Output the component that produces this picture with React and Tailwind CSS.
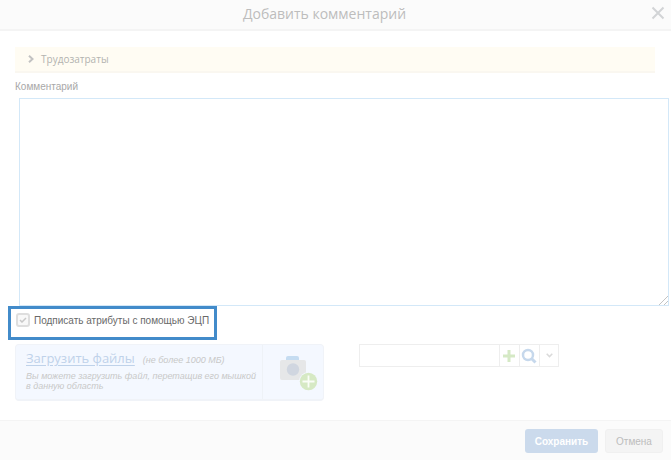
import { useState } from "react";

function CameraIcon() {
  return (
    <svg width="40" height="38" viewBox="0 0 40 38" aria-hidden="true">
      <path d="M8 6V3q0-2 2-2h9q2 0 2 2v3z" fill="#c5dcf1" />
      <rect x="2" y="5" width="26" height="20" rx="2" fill="#e6e7e8" />
      <circle cx="15" cy="14.500" r="6.200" fill="#d0d6e0" />
      <circle cx="30.500" cy="26.500" r="9.500" fill="#f4f8ff" />
      <circle cx="30.500" cy="26.500" r="8.700" fill="#d6e9c4" />
      <path d="M30.500 20.500v12M24.500 26.500h12" stroke="#fafdf7" strokeWidth="1.800" />
    </svg>
  );
}

function Header() {
  return (
    <header className="flex h-[31px] border-b-2 border-[#f4f4f4] bg-[#fbfbfb]">
      <h1 className="flex-1 text-center font-['Open_Sans',sans-serif] text-[14px] leading-7 text-[#bdbdbd]">
        Добавить комментарий
      </h1>
      <button type="button" aria-label="Закрыть" className="flex w-[22px] items-start pt-[6px] pl-[2px]">
        <svg width="14" height="14" viewBox="0 0 14 14" aria-hidden="true">
          <path d="M1.500 1.500l11 11M12.500 1.500l-11 11" stroke="#d2d4d6" strokeWidth="2" />
        </svg>
      </button>
    </header>
  );
}

function UploadBox() {
  return (
    <section className="flex h-[57px] w-[309px] rounded-sm border border-b-2 border-[#f0f3f8] bg-[#f4f8ff]">
      <div className="flex-1 border-r border-[#eef2f7] pt-1 pl-[10px]">
        <div className="flex items-baseline gap-2">
          <a
            href="#files"
            className="font-['Open_Sans',sans-serif] text-[13px] leading-[18px] text-[#bfd2ea] underline underline-offset-2"
          >
            Загрузить файлы
          </a>
          <span className="text-[9px] text-[#c8c8c8] italic">(не более 1000 МБ)</span>
        </div>
        <p className="mt-[3px] text-[9px] leading-[10px] text-[#c8c8c8] italic">
          Вы можете загрузить файл, перетащив его мышкой
          <br />в данную область
        </p>
      </div>
      <div className="flex w-[60px] items-start justify-end pt-[10px] pr-[5px]">
        <CameraIcon />
      </div>
    </section>
  );
}

function LookupField() {
  return (
    <div className="flex h-[23px] w-[200px] divide-x divide-[#eeeeee] border border-[#eeeeee] bg-white">
      <input type="text" aria-label="Поиск" className="min-w-0 flex-1 px-1 text-[10px] outline-none" />
      <button type="button" aria-label="Добавить" className="flex w-5 items-center justify-center pr-[2px]">
        <svg width="14" height="14" viewBox="0 0 14 14" aria-hidden="true">
          <path d="M7 1v12M1 7h12" stroke="#d5e9c5" strokeWidth="3" />
        </svg>
      </button>
      <button type="button" aria-label="Найти" className="flex w-5 items-center justify-center pr-[2px]">
        <svg width="16" height="16" viewBox="0 0 16 16" fill="none" aria-hidden="true">
          <circle cx="7" cy="7" r="5" stroke="#c6d8ec" strokeWidth="2.500" />
          <path d="M10.500 10.500l4 4" stroke="#c6d8ec" strokeWidth="3" />
        </svg>
      </button>
      <button type="button" aria-label="Открыть список" className="flex w-[18px] items-center justify-center">
        <svg width="7" height="5" viewBox="0 0 7 5" fill="none" aria-hidden="true">
          <path d="M.7.800L3.500 3.600 6.300.800" stroke="#dadada" strokeWidth="1.500" />
        </svg>
      </button>
    </div>
  );
}

export default function App() {
  const [comment, setComment] = useState("");
  const [signed, setSigned] = useState(true);

  return (
    <form className="flex min-h-screen flex-col bg-white font-['Liberation_Sans',Arial,sans-serif]">
      <Header />

      <main className="flex-1 pt-4">
        <button
          type="button"
          className="mr-4 ml-[15px] flex h-[26px] w-[calc(100%-31px)] items-center gap-[7px] border-b-2 border-[#faf7f0] bg-[#fffcf3] pl-[13px] font-['Open_Sans',sans-serif] text-[10px] text-[#b3b3b0]"
        >
          <svg width="6" height="8" viewBox="0 0 6 8" fill="none" aria-hidden="true">
            <path d="M1 .800L4.500 4 1 7.200" stroke="#c2c2c2" strokeWidth="2" />
          </svg>
          Трудозатраты
        </button>

        <div className="pt-2 pr-[2px] pl-[15px]">
          <label htmlFor="comment" className="block text-[10px] leading-3 text-[#a8a8a8]">
            Комментарий
          </label>
          <div className="pt-[5px] pl-1">
            <textarea
              id="comment"
              value={comment}
              onChange={(e) => setComment(e.target.value)}
              className="block h-[208px] w-full resize-y border border-[#d3e8f8] p-1 text-[10px] outline-none [&::-webkit-resizer]:bg-[linear-gradient(135deg,transparent_68%,#c4c4c4_68%,#c4c4c4_72%,transparent_72%,transparent_84%,#c4c4c4_84%,#c4c4c4_88%,transparent_88%)]"
            />
          </div>
        </div>

        <div className="ml-2 flex h-[34px] w-[209px] items-start border-3 border-[#428bca] pt-1 pl-[5px]">
          <label className="flex items-start gap-1 text-[10px] leading-4 text-[#696969]">
            <span className="grid size-[14px] place-items-center">
              <input
                type="checkbox"
                checked={signed}
                onChange={(e) => setSigned(e.target.checked)}
                className="col-start-1 row-start-1 size-[14px] appearance-none rounded-[3px] border-2 border-[#dedede] bg-[#f8f8f8]"
              />
              {signed && (
                <svg
                  width="8"
                  height="6"
                  viewBox="0 0 8 6"
                  fill="none"
                  className="pointer-events-none col-start-1 row-start-1"
                  aria-hidden="true"
                >
                  <path d="M1 3l2 2 4-4" stroke="#c8c8c8" strokeWidth="1.500" />
                </svg>
              )}
            </span>
            Подписать атрибуты с помощью ЭЦП
          </label>
        </div>

        <div className="mt-1 flex items-start gap-[35px] pl-[15px]">
          <UploadBox />
          <LookupField />
        </div>
      </main>

      <footer className="flex h-10 items-start justify-end gap-[7px] border-t border-[#f4f4f4] bg-[#fbfbfb] pt-2 pr-2">
        <button
          type="submit"
          className="h-6 w-[73px] rounded-[3px] bg-[#cbdaec] text-[10px] font-bold text-white"
        >
          Сохранить
        </button>
        <button
          type="button"
          className="h-6 w-[58px] rounded-[3px] border border-[#f0f0f0] bg-[#f4f4f4] text-[10px] text-[#bdbdbd]"
        >
          Отмена
        </button>
      </footer>
    </form>
  );
}
